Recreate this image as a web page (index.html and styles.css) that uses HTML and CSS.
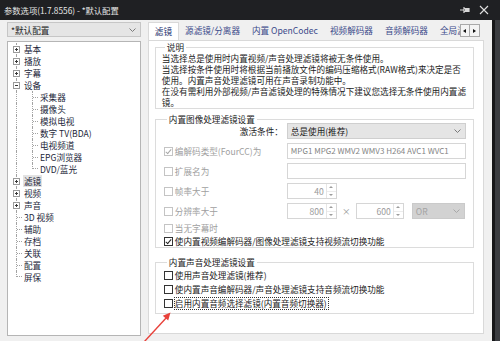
FILE: index.html
```html
<!DOCTYPE html>
<html lang="zh-CN">
<head>
  <meta charset="UTF-8" />
  <title>参数选项</title>
  <link rel="stylesheet" href="styles.css">
</head>
<body>

  <!-- 标题栏 -->
  <header class="titlebar">
    <span class="title">参数选项(1.7.8556) - *默认配置</span>
    <span class="title-btns">
      <svg width="11" height="8" viewBox="0 0 11 8"><path d="M0 4h4M4 1v6M4 2.5h5v3H4" fill="none" stroke="#d8d8d8" stroke-width="1.2"/><rect x="5" y="2.5" width="4" height="3" fill="#d8d8d8"/></svg>
      <svg width="10" height="10" viewBox="0 0 10 10"><path d="M1 1l8 8M9 1l-8 8" stroke="#e0e0e0" stroke-width="1.1"/></svg>
    </span>
  </header>

  <div class="main">
    <div class="dialog">

      <!-- 左侧：配置 + 目录树 -->
      <aside class="sidebar">
        <div class="combo profile">
          <span>*默认配置</span>
          <svg width="7" height="4" viewBox="0 0 7 4"><path d="M0.5 0.5l3 3 3-3" fill="none" stroke="#7a7a7a"/></svg>
        </div>

        <ul class="tree">
          <li class="node"><span class="joint first"><span class="box plus"></span></span><span class="label">基本</span></li>
          <li class="node"><span class="joint"><span class="box plus"></span></span><span class="label">播放</span></li>
          <li class="node"><span class="joint"><span class="box plus"></span></span><span class="label">字幕</span></li>
          <li class="node"><span class="joint"><span class="box"></span></span><span class="label">设备</span></li>
          <li class="node"><span class="joint pass"></span><span class="joint"><span class="dash"></span></span><span class="label">采集器</span></li>
          <li class="node"><span class="joint pass"></span><span class="joint"><span class="dash"></span></span><span class="label">摄像头</span></li>
          <li class="node"><span class="joint pass"></span><span class="joint"><span class="dash"></span></span><span class="label">模拟电视</span></li>
          <li class="node"><span class="joint pass"></span><span class="joint"><span class="dash"></span></span><span class="label">数字 TV(BDA)</span></li>
          <li class="node"><span class="joint pass"></span><span class="joint"><span class="dash"></span></span><span class="label">电视频道</span></li>
          <li class="node"><span class="joint pass"></span><span class="joint"><span class="dash"></span></span><span class="label">EPG浏览器</span></li>
          <li class="node"><span class="joint pass"></span><span class="joint last"><span class="dash"></span></span><span class="label">DVD/蓝光</span></li>
          <li class="node"><span class="joint"><span class="box plus"></span></span><span class="label selected">滤镜</span></li>
          <li class="node"><span class="joint"><span class="box plus"></span></span><span class="label">视频</span></li>
          <li class="node"><span class="joint"><span class="box plus"></span></span><span class="label">声音</span></li>
          <li class="node"><span class="joint"><span class="dash"></span></span><span class="label">3D 视频</span></li>
          <li class="node"><span class="joint"><span class="dash"></span></span><span class="label">辅助</span></li>
          <li class="node"><span class="joint"><span class="dash"></span></span><span class="label">存档</span></li>
          <li class="node"><span class="joint"><span class="dash"></span></span><span class="label">关联</span></li>
          <li class="node"><span class="joint"><span class="dash"></span></span><span class="label">配置</span></li>
          <li class="node"><span class="joint last"><span class="dash"></span></span><span class="label">屏保</span></li>
        </ul>
      </aside>

      <!-- 右侧：选项卡 -->
      <section class="tabs">
        <div class="tab-strip">
          <div class="tab-list">
            <span class="tab active">滤镜</span>
            <span class="tab">源滤镜/分离器</span>
            <span class="tab">内置 OpenCodec</span>
            <span class="tab">视频解码器</span>
            <span class="tab">音频解码器</span>
            <span class="tab">全局滤镜</span>
          </div>
          <div class="tab-scroll">
            <span class="scroll-btn"><span class="tri-left"></span></span>
            <span class="scroll-btn"><span class="tri-right"></span></span>
          </div>
        </div>

        <div class="tab-page">
          <fieldset class="group note">
            <legend>说明</legend>
            <p>当选择总是使用时内置视频/声音处理滤镜将被无条件使用。<br>当选择按条件使用时将根据当前播放文件的编码压缩格式(RAW格式)来决定是否<br>使用。内置声音处理滤镜可用在声音录制功能中。<br>在没有需利用外部视频/声音滤镜处理的特殊情况下建议您选择无条件使用内置滤<br>镜。</p>
          </fieldset>

          <fieldset class="group video">
            <legend>内置图像处理滤镜设置</legend>
            <div class="row first">
              <span class="row-label right">激活条件：</span>
              <div class="combo grow">
                <span>总是使用(推荐)</span>
                <svg width="7" height="4" viewBox="0 0 7 4"><path d="M0.5 0.5l3 3 3-3" fill="none" stroke="#7a7a7a"/></svg>
              </div>
            </div>
            <div class="row">
              <label class="row-label off"><span class="cb off checked"></span>编解码类型(FourCC)为</label>
              <div class="field">MPG1 MPG2 WMV2 WMV3 H264 AVC1 WVC1</div>
            </div>
            <div class="row">
              <label class="row-label off"><span class="cb off"></span>扩展名为</label>
              <div class="field"></div>
            </div>
            <div class="row">
              <label class="row-label off"><span class="cb off"></span>帧率大于</label>
              <div class="spin"><span class="spin-val">40</span><span class="spin-btns"><span class="up"></span><span class="down"></span></span></div>
            </div>
            <div class="row">
              <label class="row-label off"><span class="cb off"></span>分辨率大于</label>
              <div class="spin"><span class="spin-val">800</span><span class="spin-btns"><span class="up"></span><span class="down"></span></span></div>
              <span class="times">×</span>
              <div class="spin narrow"><span class="spin-val">600</span><span class="spin-btns"><span class="up"></span><span class="down"></span></span></div>
              <div class="combo disabled">
                <span>OR</span>
                <svg width="7" height="4" viewBox="0 0 7 4"><path d="M0.5 0.5l3 3 3-3" fill="none" stroke="#a8a8a8"/></svg>
              </div>
            </div>
            <div class="row plain">
              <label class="row-label off"><span class="cb off"></span>当无字幕时</label>
            </div>
            <div class="row plain last">
              <label class="row-label wide"><span class="cb checked"></span>使内置视频编解码器/图像处理滤镜支持视频流切换功能</label>
            </div>
          </fieldset>

          <fieldset class="group audio">
            <legend>内置声音处理滤镜设置</legend>
            <label class="check"><span class="cb"></span>使用声音处理滤镜(推荐)</label>
            <label class="check"><span class="cb"></span>使内置声音编解码器/声音处理滤镜支持音频流切换功能</label>
            <label class="check"><span class="cb"></span><span class="focus">启用内置音频选择滤镜(内置音频切换器)</span></label>
          </fieldset>
        </div>
      </section>
    </div>
    <div class="backdrop"></div>
  </div>

  <!-- 标注箭头 -->
  <svg class="arrow" width="500" height="341" viewBox="0 0 500 341">
    <path d="M144 342L167 317" stroke="#e8413a" stroke-width="1.4"/>
    <polygon points="170.5,312.5 168.2,320.5 162.8,315.8" fill="#e8413a"/>
  </svg>

</body>
</html>
```

FILE: styles.css
```css
* {
  box-sizing: border-box;
}

body {
  margin: 0;
  width: 500px;
  height: 341px;
  overflow: hidden;
  position: relative;
  background: #1f2023;
  font-family: "Noto Sans CJK SC", sans-serif;
  font-size: 8.6px;
  color: #1b1b1b;
}

/* 标题栏 */
.titlebar {
  height: 20px;
  display: flex;
  align-items: center;
  justify-content: space-between;
  padding: 0 11px 0 4px;
  color: #e6e6e6;
  font-size: 8.3px;
}

.title-btns {
  display: flex;
  align-items: center;
  gap: 8px;
}

.main {
  display: flex;
  height: 321px;
}

.dialog {
  width: 492px;
  background: #f0f0f0;
  display: flex;
}

.backdrop {
  flex: 1;
  background: linear-gradient(to right, #17181a 0 3px, #3b3d41 3px);
}

/* 左侧 */
.sidebar {
  width: 143px;
  padding: 2px 0 0 7px;
  display: flex;
  flex-direction: column;
  gap: 4px;
}

.combo {
  height: 16px;
  background: #e5e5e5;
  border: 1px solid #cfcfcf;
  display: flex;
  align-items: center;
  justify-content: space-between;
  padding: 0 4px 0 3px;
  white-space: nowrap;
}

.combo.profile {
  height: 15px;
  border-color: #c6c6c6;
}

.combo.grow {
  flex: 1;
}

.combo.disabled {
  width: 53px;
  margin-left: 8px;
  background: #d2d2d2;
  border-color: #cacaca;
  color: #a3a3a3;
}

.tree {
  list-style: none;
  margin: 0;
  height: 295px;
  padding: 1px 0 0 8px;
  background: #fff;
  border: 1px solid #b5b5b5;
}

.node {
  display: flex;
  height: 12px;
  align-items: center;
}

.joint {
  width: 6px;
  height: 12px;
  flex: none;
  border-left: 1px dotted #a3a3a3;
  display: flex;
  align-items: center;
}

.joint.pass {
  width: 16px;
}

.joint.last {
  height: 6px;
  align-self: flex-start;
  align-items: flex-end;
}

.dash {
  width: 5px;
  border-top: 1px dotted #a3a3a3;
}

.box {
  width: 7px;
  height: 7px;
  margin-left: -4px;
  flex: none;
  background: #fff;
  border: 1px solid #9a9a9a;
  display: grid;
  place-items: center;
}

.box::before,
.box.plus::after {
  content: "";
  grid-area: 1 / 1;
  width: 3px;
  height: 1px;
  background: #3a3a3a;
}

.box.plus::after {
  width: 1px;
  height: 3px;
}

.label {
  line-height: 12px;
  padding: 0 1px;
  margin-left: 1px;
  white-space: nowrap;
  color: #1c1f3a;
}

.label.selected {
  background: #e3e3e3;
}

/* 选项卡 */
.tabs {
  flex: 1;
  display: flex;
  flex-direction: column;
  padding: 2px 8px 7px 7px;
}

.tab-strip {
  height: 18px;
  display: flex;
}

.tab-list {
  width: 312px;
  display: flex;
  overflow: hidden;
}

.tab {
  padding: 0 6px;
  line-height: 17px;
  white-space: nowrap;
  color: #3b4a8a;
}

.tab.active {
  position: relative;
  z-index: 1;
  height: 19px;
  background: #fff;
  border: 1px solid #d9d9d9;
  border-bottom: none;
  color: #24326e;
}

.tab-scroll {
  display: flex;
  height: 13px;
  margin-top: 2px;
}

.scroll-btn {
  width: 10px;
  background: #f4f4f4;
  border: 1px solid #a9a9a9;
  display: grid;
  place-items: center;
}

.scroll-btn + .scroll-btn {
  border-left: none;
}

.tri-left,
.tri-right {
  width: 0;
  height: 0;
  border-top: 2.5px solid transparent;
  border-bottom: 2.5px solid transparent;
}

.tri-left {
  border-right: 3px solid #111;
}

.tri-right {
  border-left: 3px solid #111;
}

.tab-page {
  flex: 1;
  background: #fff;
  border: 1px solid #d9d9d9;
  padding: 1px 9px 0 6px;
}

/* 分组框 */
.group {
  margin: 0;
  min-width: 0;
  border: 1px solid #dcdcdc;
  padding: 0 7px 0 8px;
}

.group legend {
  padding: 0 2px;
  margin-left: 3px;
  line-height: 11px;
}

.note {
  padding-left: 6px;
}

.note p {
  margin: 0;
  line-height: 11px;
  white-space: nowrap;
}

.video {
  margin-top: 5px;
}

.row {
  height: 16px;
  margin-top: 4px;
  display: flex;
  align-items: center;
}

.row.first {
  margin-top: -2px;
}

.row.plain {
  height: 14px;
  margin-top: 2px;
}

.row.last {
  height: 12px;
  margin-top: 0;
}

.row-label {
  width: 123px;
  flex: none;
  display: flex;
  align-items: center;
  gap: 2px;
  white-space: nowrap;
}

.row-label.right {
  justify-content: flex-end;
  padding-right: 4px;
}

.row-label.wide {
  width: auto;
}

.row-label.off {
  color: #a0a0a0;
}

.cb {
  width: 9px;
  height: 9px;
  flex: none;
  background: #fff;
  border: 1px solid #333;
  display: grid;
  place-items: center;
}

.cb.off {
  border-color: #c4c4c4;
}

.cb.checked::after {
  content: "";
  width: 2px;
  height: 5px;
  margin-top: -1px;
  border-right: 1px solid #222;
  border-bottom: 1px solid #222;
  transform: rotate(40deg);
}

.cb.off.checked::after {
  border-color: #a8a8a8;
}

.field {
  flex: 1;
  height: 16px;
  border: 1px solid #d6d6d6;
  padding: 0 3px;
  font-size: 8px;
  line-height: 14px;
  color: #858585;
  white-space: nowrap;
  overflow: hidden;
}

.spin {
  width: 50px;
  height: 16px;
  display: flex;
  border: 1px solid #d6d6d6;
}

.spin.narrow {
  width: 48px;
}

.spin-val {
  flex: 1;
  text-align: right;
  padding-right: 2px;
  line-height: 14px;
  color: #9a9a9a;
}

.spin-btns {
  width: 10px;
  border-left: 1px solid #e6e6e6;
  display: flex;
  flex-direction: column;
}

.spin-btns span {
  flex: 1;
  display: grid;
  place-items: center;
}

.spin-btns .up {
  border-bottom: 1px solid #ececec;
}

.spin-btns .up::after,
.spin-btns .down::after {
  content: "";
  width: 0;
  height: 0;
  border-left: 2px solid transparent;
  border-right: 2px solid transparent;
}

.spin-btns .up::after {
  border-bottom: 2px solid #9c9c9c;
}

.spin-btns .down::after {
  border-top: 2px solid #9c9c9c;
}

.times {
  width: 19px;
  text-align: center;
  color: #9a9a9a;
}

.audio {
  margin-top: 9px;
  padding-bottom: 3px;
}

.check {
  height: 14px;
  display: flex;
  align-items: center;
  gap: 2px;
  white-space: nowrap;
}

.focus {
  outline: 1px dotted #333;
  line-height: 11px;
  padding: 0 1px 0 0;
}

/* 标注 */
.arrow {
  position: absolute;
  left: 0;
  top: 0;
  pointer-events: none;
}
```
